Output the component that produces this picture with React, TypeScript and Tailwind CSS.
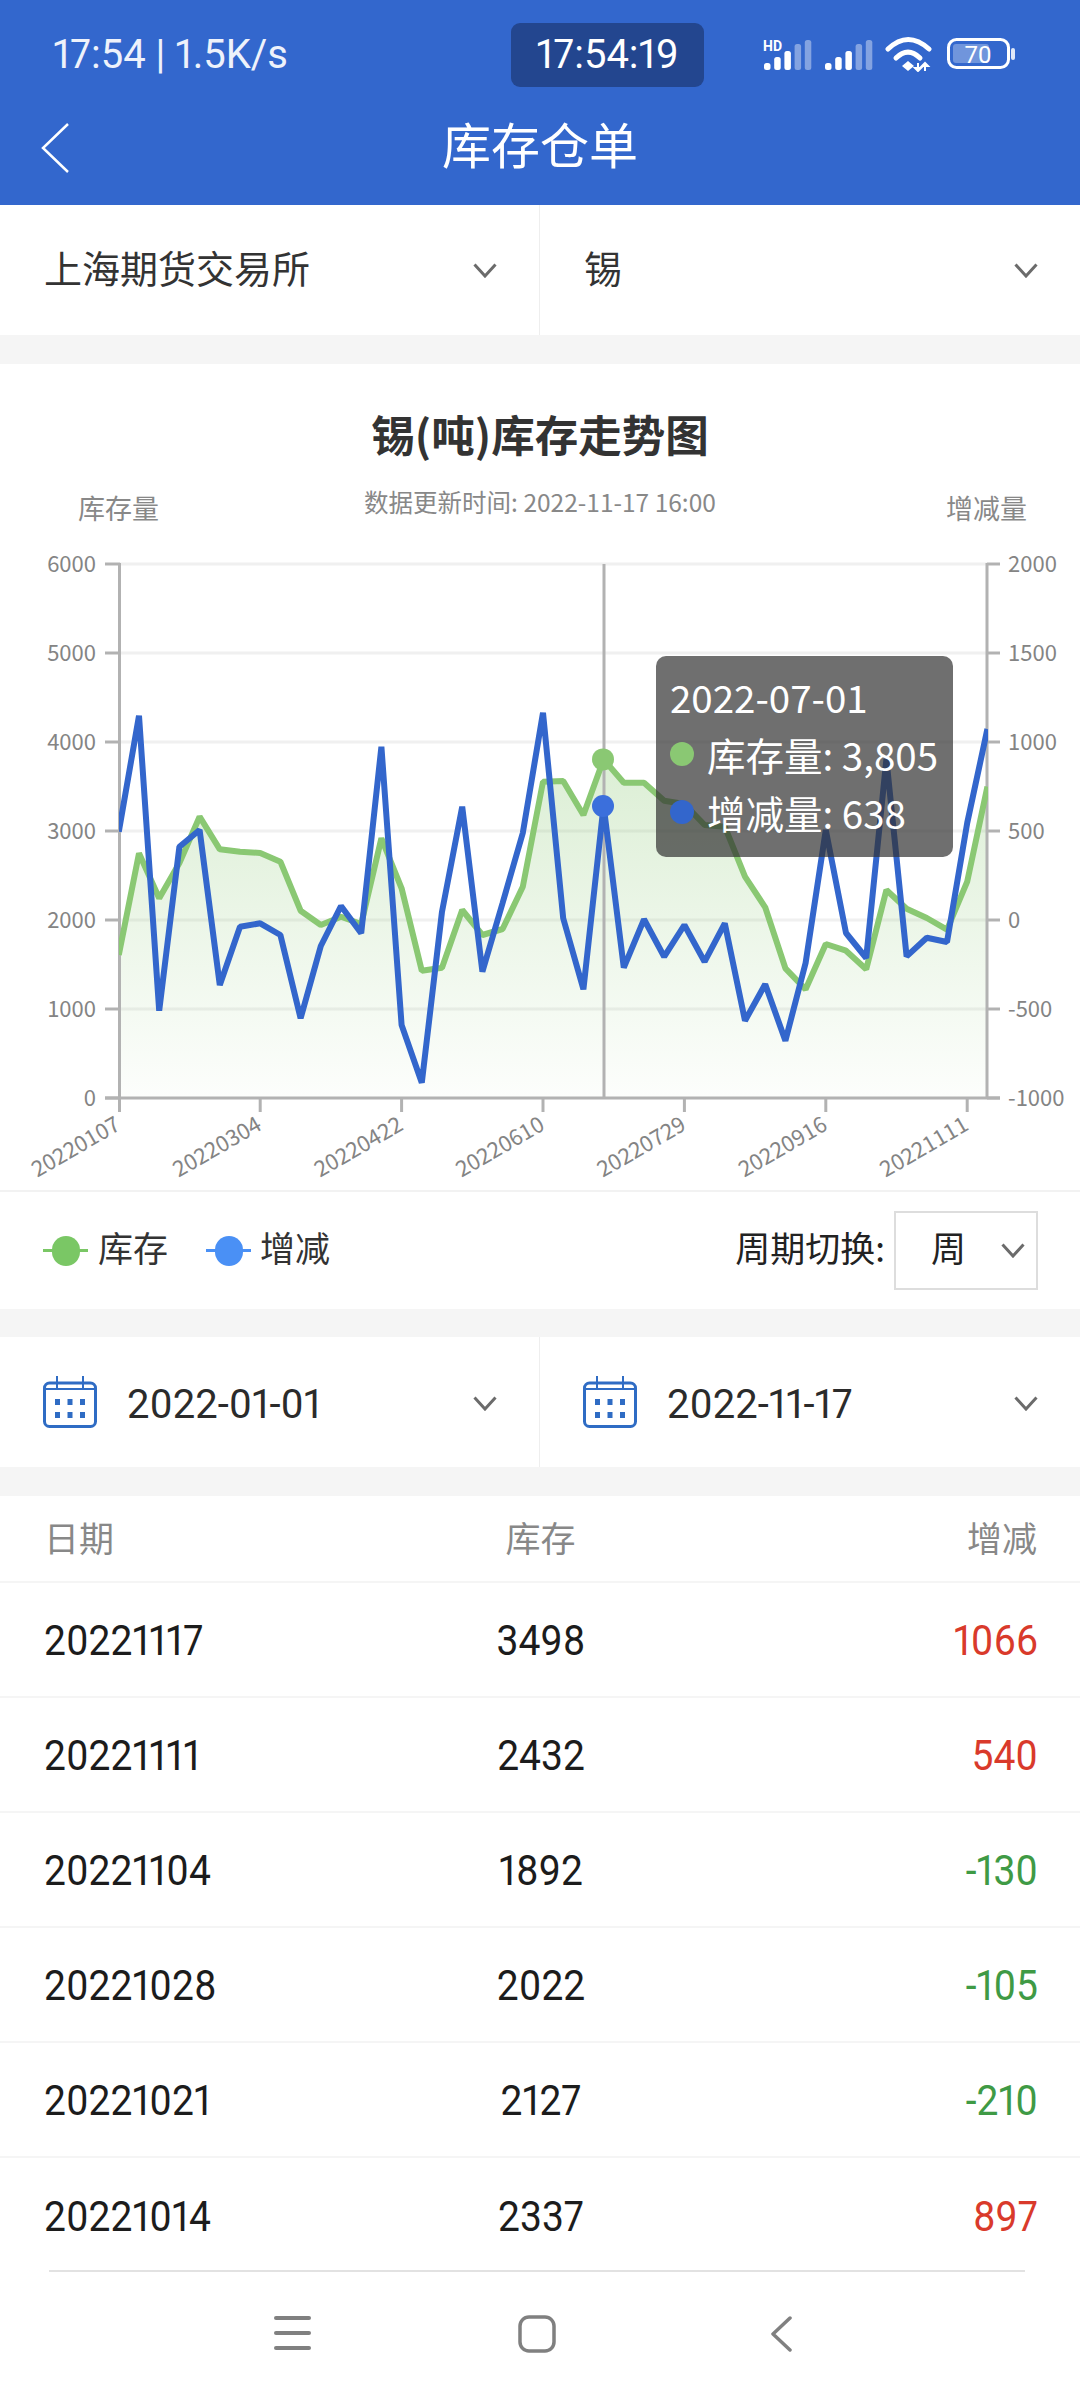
const BLUE_Y = [831.7, 715.7, 1010.7, 846.7, 830, 985, 926.7, 923.3, 935, 1018.3, 946, 906, 933.3, 746.7, 1025, 1082.7, 911.7, 806.7, 971.7, 903, 833, 712.7, 918.3, 989.3, 805.5, 967.7, 919.3, 956.7, 925, 961.7, 923.3, 1020.7, 984.3, 1040.7, 963, 830, 933, 958, 759, 956.4, 937.7, 942, 823, 729];
const GREEN_Y = [955, 853.3, 898.3, 863, 816.7, 849.3, 851.7, 853, 861.7, 910.7, 925, 916.7, 924, 838.3, 888.3, 970.7, 967.7, 910, 935, 929, 886.7, 781.7, 781, 815, 759.4, 782.7, 782.7, 800.7, 804, 825, 826.7, 876.7, 907.3, 968.3, 989.3, 944, 950.7, 969.3, 890, 908.7, 918, 929.6, 881.6, 786.7];

const X0 = 118.8;
const STEP = 20.2;
const xAt = (i: number) => X0 + i * STEP;
const toPoints = (ys: number[]) => ys.map((y, i) => `${xAt(i).toFixed(1)},${y}`).join(' ');

const GRID_Y = [564, 653, 742, 831, 920, 1009, 1098];
const LEFT_LABELS = ['6000', '5000', '4000', '3000', '2000', '1000', '0'];
const RIGHT_LABELS = ['2000', '1500', '1000', '500', '0', '-500', '-1000'];
const X_LABELS = ['20220107', '20220304', '20220422', '20220610', '20220729', '20220916', '20221111'];

const ROWS = [
  ['20221117', '3498', '1066'],
  ['20221111', '2432', '540'],
  ['20221104', '1892', '-130'],
  ['20221028', '2022', '-105'],
  ['20221021', '2127', '-210'],
  ['20221014', '2337', '897'],
];

function Chevron() {
  return (
    <svg width="24" height="15" viewBox="0 0 24 15" fill="none" className="shrink-0">
      <polyline points="1.5,1.5 12,13 22.5,1.5" stroke="#6b6b6b" strokeWidth="3" />
    </svg>
  );
}

function CalendarIcon() {
  return (
    <svg width="54" height="52" viewBox="0 0 54 52" fill="none" className="shrink-0">
      <rect x="1.5" y="7" width="51" height="43.5" rx="5" stroke="#2f6cc4" strokeWidth="3" />
      <path d="M14 0v14M40 0v14M2 13h50" stroke="#2f6cc4" strokeWidth="2" />
      <g fill="#2f6cc4">
        <rect x="12" y="23" width="5" height="6" />
        <rect x="24.5" y="23" width="5" height="6" />
        <rect x="37" y="23" width="5" height="6" />
        <rect x="12" y="36" width="5" height="6" />
        <rect x="24.5" y="36" width="5" height="6" />
        <rect x="37" y="36" width="5" height="6" />
      </g>
    </svg>
  );
}

function Signal({ hd }: { hd?: boolean }) {
  const bars = [7, 13, 19, 26, 30];
  return (
    <svg width="50" height="34" viewBox="0 0 50 34">
      {bars.map((h, i) => (
        <rect key={i} x={i * 10.2 + 1} y={33 - h} width="6.5" height={h} rx="2.5" fill="#fff" opacity={i < 3 ? 1 : 0.4} />
      ))}
      {hd && (
        <text x="0" y="14" fontSize="14" fontWeight="700" fill="#fff" fontFamily="Roboto, sans-serif">
          HD
        </text>
      )}
    </svg>
  );
}

function Wifi() {
  return (
    <svg width="48" height="36" viewBox="0 0 48 36" fill="none">
      <path d="M3 13Q23 -6 44 13" stroke="#fff" strokeWidth="5" strokeLinecap="round" />
      <path d="M11 22Q23 10 35 22" stroke="#fff" strokeWidth="5" strokeLinecap="round" />
      <path d="M17 30l6-5 6 5-6 5z" fill="#fff" />
      <path d="M33 27v8M33 35l-3-3h6zM40 35v-8M40 27l-3 3h6z" stroke="#fff" strokeWidth="2" fill="#fff" />
    </svg>
  );
}

function Battery() {
  return (
    <svg width="68" height="32" viewBox="0 0 68 32">
      <rect x="1.5" y="1.5" width="60" height="28" rx="8" fill="none" stroke="#fff" strokeWidth="3" />
      <rect x="6" y="6" width="36" height="19" rx="3" fill="#fff" opacity="0.3" />
      <rect x="64" y="10" width="4" height="12" rx="2" fill="#fff" opacity="0.85" />
      <text x="31" y="24.5" textAnchor="middle" fontSize="24" fill="#fff" fontFamily="Roboto, sans-serif">
        70
      </text>
    </svg>
  );
}

function Chart() {
  const blue = toPoints(BLUE_Y);
  const green = toPoints(GREEN_Y);
  return (
    <div className="relative h-[650px] w-full">
      <svg width="1080" height="650" viewBox="0 540 1080 650" fontFamily="'Noto Sans CJK SC', sans-serif">
        <defs>
          <linearGradient id="area" gradientUnits="userSpaceOnUse" x1="0" y1="760" x2="0" y2="1098">
            <stop offset="0" stopColor="#8ac873" stopOpacity="0.3" />
            <stop offset="1" stopColor="#8ac873" stopOpacity="0.02" />
          </linearGradient>
          <clipPath id="plot">
            <rect x="119" y="540" width="869" height="560" />
          </clipPath>
        </defs>
        {GRID_Y.slice(0, 6).map((y) => (
          <line key={y} x1="120" x2="987" y1={y} y2={y} stroke="#f0f0f0" strokeWidth="3" />
        ))}
        <polygon points={`${X0},1098 ${green} 987,1098`} fill="url(#area)" clipPath="url(#plot)" />
        <g stroke="#b2b2b2" strokeWidth="3">
          <line x1="119.5" x2="119.5" y1="563" y2="1098" />
          <line x1="987" x2="987" y1="563" y2="1098" />
          <line x1="105" x2="1000" y1="1098" y2="1098" />
          {GRID_Y.map((y) => (
            <g key={y}>
              <line x1="105" x2="120" y1={y} y2={y} />
              <line x1="987" x2="1000" y1={y} y2={y} />
            </g>
          ))}
          {X_LABELS.map((_, i) => (
            <line key={i} x1={Math.max(xAt(i * 7), 119.5)} x2={Math.max(xAt(i * 7), 119.5)} y1="1098" y2="1112" />
          ))}
          <line x1="604" x2="604" y1="564" y2="1098" />
        </g>
        <g fontSize="22" fill="#848484">
          {LEFT_LABELS.map((t, i) => (
            <text key={t} x="96" y={GRID_Y[i] + 8} textAnchor="end">
              {t}
            </text>
          ))}
          {RIGHT_LABELS.map((t, i) => (
            <text key={t} x="1008" y={GRID_Y[i] + 8}>
              {t}
            </text>
          ))}
          {X_LABELS.map((t, i) => (
            <text key={t} textAnchor="end" transform={`translate(${xAt(i * 7) + 3} ${1129}) rotate(-30)`}>
              {t}
            </text>
          ))}
        </g>
        <g clipPath="url(#plot)">
          <polyline points={green} fill="none" stroke="#8ac873" strokeWidth="6" strokeLinejoin="bevel" />
          <polyline points={blue} fill="none" stroke="#3366cc" strokeWidth="6" strokeLinejoin="bevel" />
        </g>
        <circle cx="603" cy="759.4" r="11" fill="#8ac873" />
        <circle cx="603" cy="806" r="11" fill="#3b6fdc" />
      </svg>
      <div className="absolute left-[656px] top-[116px] flex h-[201px] w-[297px] flex-col justify-center rounded-[10px] bg-[rgba(50,50,50,0.7)] pb-[5px] pl-[14px] font-['Noto_Sans_CJK_SC',sans-serif] text-[38.5px] leading-[58px] text-white">
        <div>2022-07-01</div>
        <div className="flex items-center">
          <span className="mr-[13px] h-[24px] w-[24px] rounded-full bg-[#8ac873]" />
          库存量: 3,805
        </div>
        <div className="flex items-center">
          <span className="mr-[13px] h-[24px] w-[24px] rounded-full bg-[#3366cc]" />
          增减量: 638
        </div>
      </div>
    </div>
  );
}

function LegendMark({ color }: { color: string }) {
  return (
    <span className="relative flex h-[30px] w-[45px] items-center justify-center">
      <span className="absolute h-[3px] w-[45px]" style={{ backgroundColor: color }} />
      <span className="relative h-[30px] w-[28px] rounded-full" style={{ backgroundColor: color }} />
    </span>
  );
}

function DateCell({ value, border }: { value: string; border?: boolean }) {
  return (
    <div className={`flex w-[540px] items-center pl-[43px] pr-[42px] ${border ? 'border-r border-[#eeeeee]' : ''}`}>
      <CalendarIcon />
      <span className="ml-[30px] flex-1 pt-[5px] font-['Roboto',sans-serif] text-[40px] leading-none text-[#2b2b2b] proportional-nums">
        {value}
      </span>
      <span className="mt-[3px]">
        <Chevron />
      </span>
    </div>
  );
}

export default function App() {
  return (
    <div className="flex h-[2400px] w-[1080px] flex-col overflow-hidden bg-[#f5f5f5] font-['Noto_Sans_CJK_SC',sans-serif]">
      <header className="h-[205px] shrink-0 bg-[#3367cd] text-white">
        <div className="flex pl-[53px] pt-[23px]">
          <div className="flex h-[64px] w-[458px] items-center font-['Roboto',sans-serif] text-[40px] text-[#eef2fb] proportional-nums">
            17:54 | 1.5K/s
          </div>
          <div className="flex h-[64px] w-[193px] items-center justify-center rounded-[9px] bg-[#23468f] font-['Roboto',sans-serif] text-[40px] proportional-nums">
            17:54:19
          </div>
          <div className="ml-[59px] flex h-[64px] items-center gap-[11px] pb-[2px]">
            <Signal hd />
            <Signal />
            <Wifi />
            <span className="ml-[3px]">
              <Battery />
            </span>
          </div>
        </div>
        <div className="grid h-[118px] grid-cols-[1fr_auto_1fr] items-center">
          <div className="pl-[40px] pt-[4px]">
            <svg width="30" height="52" viewBox="0 0 30 52" fill="none">
              <polyline points="28,2 3,26 28,50" stroke="#fff" strokeWidth="2.5" />
            </svg>
          </div>
          <div className="pb-[8px] text-[49px] leading-none">库存仓单</div>
          <div />
        </div>
      </header>

      <div className="flex h-[130px] shrink-0 bg-white">
        <div className="flex w-[540px] items-center justify-between border-r border-[#eeeeee] pl-[44px] pr-[42px]">
          <span className="pb-[8px] text-[38px] text-[#333333]">上海期货交易所</span>
          <Chevron />
        </div>
        <div className="flex w-[540px] items-center justify-between pl-[44px] pr-[42px]">
          <span className="pb-[8px] text-[38px] text-[#333333]">锡</span>
          <Chevron />
        </div>
      </div>

      <section className="mt-[29px] shrink-0 bg-white">
        <div className="h-[176px]">
          <div className="pt-[40px] text-center text-[43.5px] font-bold leading-[60px] text-[#333333]">
            锡(吨)库存走势图
          </div>
          <div className="mt-[18px] grid grid-cols-[1fr_auto_1fr] items-start">
            <span className="pl-[78px] pt-[6px] text-[27px] leading-[40px] text-[#888888]">库存量</span>
            <span className="text-[24.5px] leading-[40px] text-[#888888]">数据更新时间: 2022-11-17 16:00</span>
            <span className="pr-[53px] pt-[6px] text-right text-[27px] leading-[40px] text-[#888888]">增减量</span>
          </div>
        </div>
        <Chart />
        <div className="flex h-[119px] items-center justify-between border-t-2 border-[#f2f2f2] pl-[43px] pr-[42px]">
          <div className="flex items-center text-[35px] text-[#333333]">
            <LegendMark color="#7ac765" />
            <span className="ml-[10px] pb-[6px]">库存</span>
            <span className="ml-[38px]">
              <LegendMark color="#4a90f5" />
            </span>
            <span className="ml-[9px] pb-[6px]">增减</span>
          </div>
          <div className="flex items-center text-[35px] text-[#222222]">
            <span className="mr-[9px] pb-[6px]">周期切换:</span>
            <div className="flex h-[79px] w-[144px] items-center justify-between border-2 border-[#dddddd] pl-[35px] pr-[11px]">
              <span className="pb-[6px]">周</span>
              <Chevron />
            </div>
          </div>
        </div>
      </section>

      <div className="mt-[28px] flex h-[130px] shrink-0 bg-white">
        <DateCell value="2022-01-01" border />
        <DateCell value="2022-11-17" />
      </div>

      <section className="mt-[29px] flex-1 bg-white">
        <div className="flex h-[87px] items-center justify-between border-b-2 border-[#f5f5f5] pb-[3px] pl-[44px] pr-[43px] text-[35px] text-[#888888]">
          <span className="w-[300px]">日期</span>
          <span>库存</span>
          <span className="w-[300px] text-right">增减</span>
        </div>
        {ROWS.map(([date, stock, change], i) => (
          <div
            key={date}
            className={`flex h-[115px] items-center justify-between pl-[44px] pr-[42px] pt-[4px] font-['Roboto',sans-serif] text-[39px] text-[#1c1c1c] proportional-nums ${
              i < 5 ? 'border-b-2 border-[#f5f5f5]' : ''
            }`}
          >
            <span className="inline-block w-[300px] origin-left scale-y-[1.08]">{date}</span>
            <span className="inline-block scale-y-[1.08]">{stock}</span>
            <span
              className={`inline-block w-[300px] scale-y-[1.08] text-right ${
                change.startsWith('-') ? 'text-[#3f9a45]' : 'text-[#d93a2b]'
              }`}
            >
              {change}
            </span>
          </div>
        ))}
        <div className="-mt-[3px] ml-[49px] mr-[55px] h-[2px] bg-[#e2e2e2]" />
        <nav className="flex h-[128px] items-center pb-[4px] pl-[274px]">
          <svg width="38" height="36" viewBox="0 0 38 36" className="shrink-0">
            <g fill="#808080">
              <rect x="0" y="0" width="37" height="4" rx="2" />
              <rect x="0" y="15" width="37" height="4" rx="2" />
              <rect x="0" y="30" width="37" height="4" rx="2" />
            </g>
          </svg>
          <svg width="38" height="38" viewBox="0 0 38 38" fill="none" className="ml-[206px] shrink-0">
            <rect x="2" y="2" width="34" height="34" rx="9" stroke="#808080" strokeWidth="3.5" />
          </svg>
          <svg width="22" height="36" viewBox="0 0 22 36" fill="none" className="ml-[214px] shrink-0">
            <polyline points="20,2 3,18 20,34" stroke="#808080" strokeWidth="3.5" strokeLinecap="round" strokeLinejoin="round" />
          </svg>
        </nav>
      </section>
    </div>
  );
}
